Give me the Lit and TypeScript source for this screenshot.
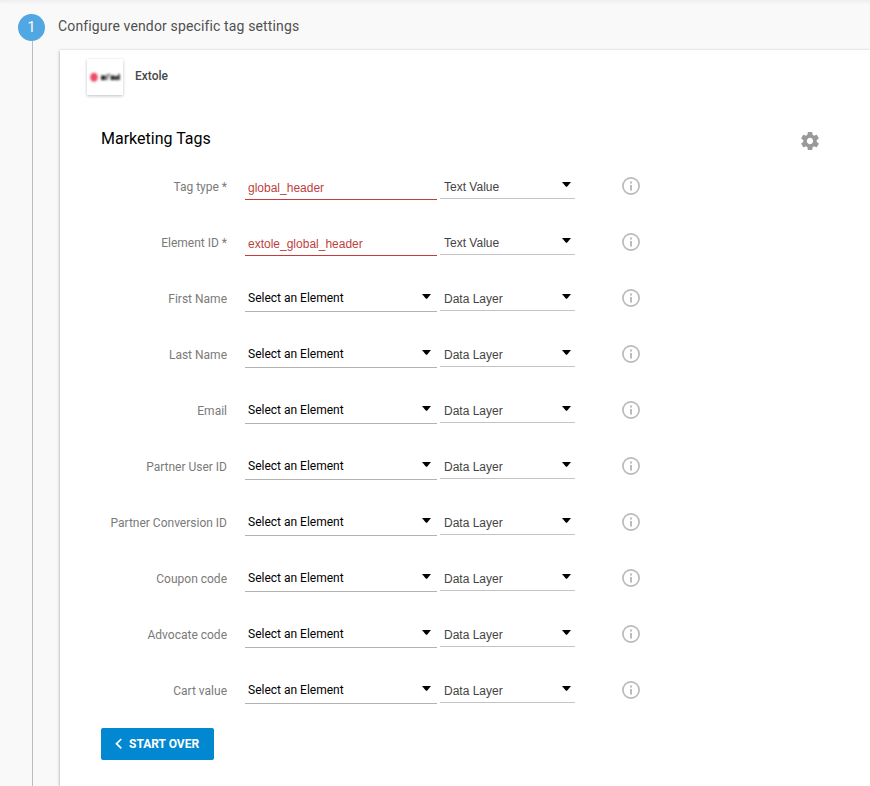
import { LitElement, html, css, nothing } from "lit";
import { customElement, property } from "lit/decorators.js";

interface TagField {
  id: string;
  label: string;
  value?: string;
  source: string;
}

const FIELDS: TagField[] = [
  { id: "tag-type", label: "Tag type *", value: "global_header", source: "Text Value" },
  { id: "element-id", label: "Element ID *", value: "extole_global_header", source: "Text Value" },
  { id: "first-name", label: "First Name", source: "Data Layer" },
  { id: "last-name", label: "Last Name", source: "Data Layer" },
  { id: "email", label: "Email", source: "Data Layer" },
  { id: "partner-user-id", label: "Partner User ID", source: "Data Layer" },
  { id: "partner-conversion-id", label: "Partner Conversion ID", source: "Data Layer" },
  { id: "coupon-code", label: "Coupon code", source: "Data Layer" },
  { id: "advocate-code", label: "Advocate code", source: "Data Layer" },
  { id: "cart-value", label: "Cart value", source: "Data Layer" },
];

@customElement("tag-field-row")
export class TagFieldRow extends LitElement {
  @property({ attribute: false }) field!: TagField;

  static styles = css`
    :host {
      display: grid;
      grid-template-columns: 126px minmax(0, 210px) minmax(0, 138px) 65px;
      align-items: center;
      height: 56px;
      font-family: Roboto, sans-serif;
      font-size: 12px;
    }
    .label {
      text-align: right;
      color: #7a7a7a;
      line-height: 16px;
      padding-top: 2px;
    }
    .control {
      display: grid;
      height: 28px;
      padding-left: 18px;
    }
    .source {
      display: grid;
      height: 27px;
      padding: 0 0 1px 3px;
    }
    .box {
      grid-area: 1 / 1;
      box-sizing: border-box;
      width: 100%;
      height: 100%;
      margin: 0;
      border: 0;
      border-bottom: 1px solid #b3b3b3;
      border-radius: 0;
      background: transparent;
      appearance: none;
      outline: none;
      padding: 0 3px;
      font: 12px/16px Roboto, sans-serif;
      color: #000;
    }
    .text {
      padding-top: 3px;
      border-bottom: 0;
      box-shadow: inset 0 -1px 0 #c43c3a;
      font-family: "Liberation Sans", Arial, sans-serif;
      color: #bd3f3d;
    }
    .kind {
      padding: 3px 4px 0 4px;
      border-bottom-color: #c4c4c4;
      font-family: "Liberation Sans", Arial, sans-serif;
      color: #444;
    }
    .arrow {
      grid-area: 1 / 1;
      justify-self: end;
      width: 9px;
      height: 5px;
      margin: 10px 6px 0 0;
      pointer-events: none;
    }
    .source .arrow {
      margin-right: 4px;
    }
    .info {
      display: block;
      justify-self: end;
      width: 18px;
      height: 18px;
      padding: 0;
      border: 0;
      background: none;
      cursor: pointer;
    }
    .info svg {
      display: block;
    }
  `;

  private arrow() {
    return html`<svg class="arrow" viewBox="0 0 9 5" aria-hidden="true">
      <path d="M0 0h9L5 4.8H4z" fill="#000" />
    </svg>`;
  }

  render() {
    const f = this.field;
    return html`
      <label class="label" for=${f.id}>${f.label}</label>
      <div class="control">
        ${f.value
          ? html`<input class="box text" id=${f.id} type="text" .value=${f.value} />`
          : html`<select class="box" id=${f.id}>
              <option>Select an Element</option>
            </select>`}
        ${f.value ? nothing : this.arrow()}
      </div>
      <div class="source">
        <select class="box kind" aria-label="${f.label} source">
          <option>${f.source}</option>
        </select>
        ${this.arrow()}
      </div>
      <button class="info" type="button" aria-label="About ${f.label}">
        <svg width="18" height="18" viewBox="0 0 18 18" aria-hidden="true">
          <circle cx="9" cy="9" r="8.1" fill="none" stroke="#bababa" stroke-width="1.7" />
          <path d="M8.1 4.6h1.8v1.8H8.1zM8.1 8h1.8v5.4H8.1z" fill="#b4b4b4" />
        </svg>
      </button>
    `;
  }
}

@customElement("app-root")
export class AppRoot extends LitElement {
  static styles = css`
    :host {
      display: block;
      font-family: Roboto, sans-serif;
    }
    .page {
      display: grid;
      grid-template-columns: 60px minmax(0, 1fr);
      grid-template-rows: 50px 1fr;
      box-sizing: border-box;
      min-height: 100vh;
      background: #f9f9f9;
      box-shadow: inset 0 4px 4px -3px #e8e8e8;
      overflow: hidden;
    }
    .rail {
      grid-row: 1 / 3;
      display: flex;
      flex-direction: column;
      padding: 14px 0 0 18px;
    }
    .step {
      width: 27px;
      height: 27px;
      border-radius: 50%;
      background: #51a7e1;
      color: #fff;
      font-size: 14px;
      line-height: 26px;
      text-align: center;
    }
    .line {
      flex: 1;
      width: 1px;
      margin-left: 14px;
      background: #bdbdbd;
    }
    .title {
      margin: 0 0 0 -2px;
      padding-top: 16px;
      font-size: 14px;
      font-weight: 400;
      line-height: 20px;
      letter-spacing: 0.01em;
      color: #505050;
    }
    .card {
      padding: 9px 51px 26px 41px;
      background: #fff;
      box-shadow: 0 1px 3px rgba(0, 0, 0, 0.4);
    }
    .vendor {
      display: flex;
      gap: 12px;
      margin-left: -14px;
    }
    .logo {
      width: 36px;
      height: 36px;
      background: #fff;
      box-shadow: 0 1px 3px rgba(0, 0, 0, 0.25);
    }
    .logo svg {
      display: block;
    }
    .name {
      font-size: 12px;
      font-weight: 500;
      line-height: 34px;
      color: #484848;
    }
    .head {
      display: flex;
      justify-content: space-between;
      height: 37px;
      margin-top: 26px;
    }
    .heading {
      margin: 0;
      font-size: 16px;
      font-weight: 400;
      line-height: 35px;
      color: #000;
    }
    .gear {
      align-self: end;
      display: flex;
      align-items: center;
      height: 34px;
      padding: 0;
      border: 0;
      background: none;
      cursor: pointer;
    }
    .restart {
      display: flex;
      align-items: center;
      gap: 6px;
      height: 32px;
      margin-top: 10px;
      padding: 0 15px 0 14px;
      border: 0;
      border-radius: 2px;
      background: #0288d1;
      color: #fff;
      font: 700 12px/16px Roboto, sans-serif;
      cursor: pointer;
    }
  `;

  render() {
    return html`
      <main class="page">
        <div class="rail">
          <span class="step">1</span>
          <span class="line"></span>
        </div>
        <h1 class="title">Configure vendor specific tag settings</h1>
        <section class="card">
          <div class="vendor">
            <div class="logo">
              <svg width="36" height="36" viewBox="0 0 36 36" role="img" aria-label="Extole logo">
                <defs>
                  <filter id="soft" x="-30%" y="-60%" width="160%" height="220%">
                    <feGaussianBlur stdDeviation="0.8" />
                  </filter>
                </defs>
                <g filter="url(#soft)">
                  <ellipse cx="7" cy="18.2" rx="3.8" ry="4.5" fill="#ee4c66" />
                  <path d="M14 16.4h4.6v4.6H14zM19.6 15.4h1.2v5.6h-1.2zM21.6 14.8h1.2v2h-1.2zM23.6 16.6h3.6v4.4h-3.6zM27.6 17h3v4h-3zM31 15.2h1.8v5.8H31z" fill="#222" />
                </g>
              </svg>
            </div>
            <span class="name">Extole</span>
          </div>
          <div class="head">
            <h2 class="heading">Marketing Tags</h2>
            <button class="gear" type="button" aria-label="Settings">
              <svg width="18" height="18" viewBox="2 2 20 20" aria-hidden="true">
                <path
                  fill="#999"
                  d="M19.43 12.98c.04-.32.07-.64.07-.98s-.03-.66-.07-.98l2.11-1.65c.19-.15.24-.42.12-.64l-2-3.46c-.12-.22-.39-.3-.61-.22l-2.49 1c-.52-.4-1.08-.73-1.69-.98l-.38-2.65C14.46 2.18 14.25 2 14 2h-4c-.25 0-.46.18-.49.42l-.38 2.65c-.61.25-1.17.59-1.69.98l-2.49-1c-.23-.09-.49 0-.61.22l-2 3.46c-.13.22-.07.49.12.64l2.11 1.65c-.04.32-.07.65-.07.98s.03.66.07.98l-2.11 1.65c-.19.15-.24.42-.12.64l2 3.46c.12.22.39.3.61.22l2.49-1c.52.4 1.08.73 1.69.98l.38 2.65c.03.24.24.42.49.42h4c.25 0 .46-.18.49-.42l.38-2.65c.61-.25 1.17-.59 1.69-.98l2.49 1c.23.09.49 0 .61-.22l2-3.46c.12-.22.07-.49-.12-.64l-2.11-1.65zM12 15.5c-1.93 0-3.5-1.57-3.5-3.5s1.57-3.5 3.5-3.5 3.5 1.57 3.5 3.5-1.57 3.5-3.5 3.5z"
                />
              </svg>
            </button>
          </div>
          ${FIELDS.map((field) => html`<tag-field-row .field=${field}></tag-field-row>`)}
          <button class="restart" type="button">
            <svg width="8" height="12" viewBox="0 0 8 12" aria-hidden="true">
              <path d="M6.3 1L1.5 5.7l4.8 4.7" fill="none" stroke="#fff" stroke-width="1.7" />
            </svg>
            START OVER
          </button>
        </section>
      </main>
    `;
  }
}
